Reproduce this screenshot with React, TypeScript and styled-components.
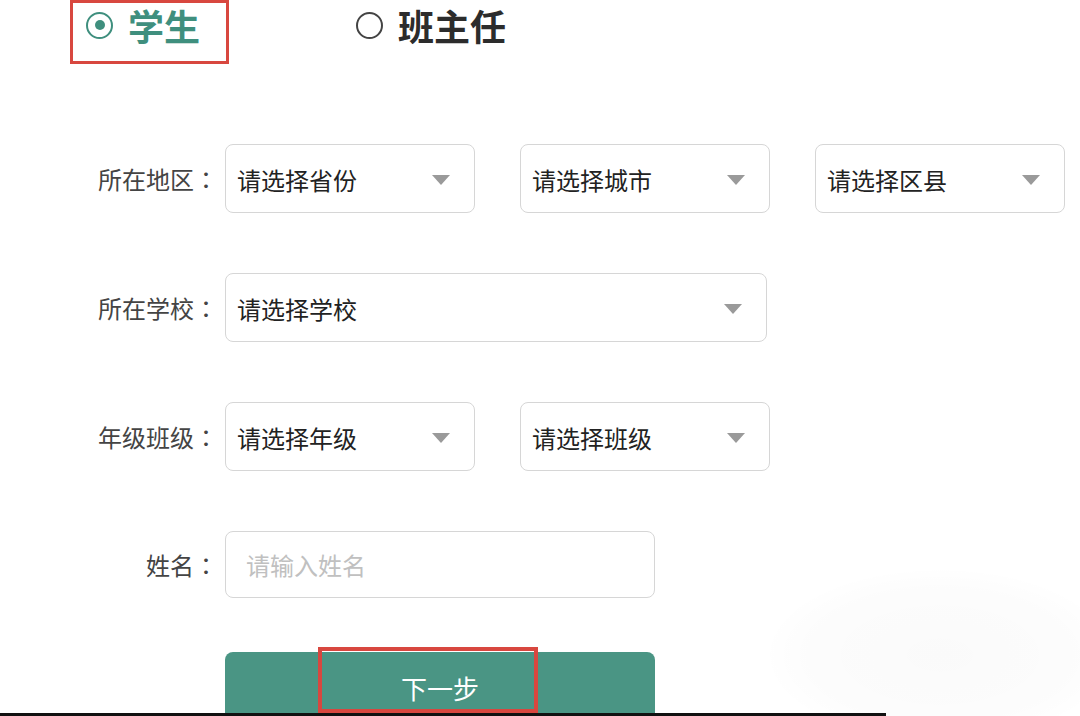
import React from "react";
import styled, { createGlobalStyle } from "styled-components";

const GlobalStyle = createGlobalStyle`
  html, body {
    margin: 0;
    padding: 0;
    background: #ffffff;
  }
  body {
    font-family: "Noto Sans CJK SC", "Noto Sans", "Liberation Sans", sans-serif;
  }
`;

const Page = styled.div`
  position: relative;
  width: 1080px;
  height: 716px;
  overflow: hidden;
  background: #ffffff;
`;

const Tabs = styled.div`
  display: flex;
  align-items: flex-start;
  gap: 111px;
  padding-left: 70px;
`;

const Tab = styled.div<{ $marked?: boolean }>`
  display: flex;
  align-items: center;
  gap: 15px;
  height: 44px;
  padding: 0 26px 14px 13px;
  border: 3px solid ${(p) => (p.$marked ? "#d8473f" : "transparent")};
`;

const Radio = styled.span<{ $checked?: boolean }>`
  position: relative;
  width: 23px;
  height: 23px;
  border-radius: 50%;
  border: 2px solid ${(p) => (p.$checked ? "#3f8f7e" : "#444444")};
  &::after {
    content: "";
    display: ${(p) => (p.$checked ? "block" : "none")};
    position: absolute;
    top: 6.5px;
    left: 6.5px;
    width: 10px;
    height: 10px;
    border-radius: 50%;
    background: #3f8f7e;
  }
`;

const TabText = styled.span<{ $active?: boolean }>`
  font-size: 36px;
  font-weight: 700;
  line-height: 44px;
  color: ${(p) => (p.$active ? "#3f8f7e" : "#2c2c2c")};
`;

const Form = styled.div`
  display: flex;
  flex-direction: column;
  gap: 60px;
  margin-top: 80px;
`;

const Row = styled.div`
  display: flex;
  align-items: center;
  gap: 7px;
`;

const Label = styled.div`
  width: 218px;
  text-align: right;
  font-size: 24px;
  color: #444444;
`;

const Colon = styled.span`
  font-family: "Noto Sans CJK TC", "Noto Sans CJK SC", sans-serif;
`;

const Controls = styled.div`
  display: flex;
  gap: 45px;
`;

const Select = styled.div<{ $width: number }>`
  display: flex;
  align-items: center;
  justify-content: space-between;
  box-sizing: border-box;
  width: ${(p) => p.$width}px;
  height: 69px;
  padding: 2px 24px 0 11px;
  border: 1.5px solid #d6d6d6;
  border-radius: 8px;
  font-size: 24px;
  color: #222222;
`;

const Arrow = styled.span`
  width: 0;
  height: 0;
  border-left: 9px solid transparent;
  border-right: 9px solid transparent;
  border-top: 10px solid #9a9a9a;
`;

const Input = styled.input`
  box-sizing: border-box;
  width: 430px;
  height: 67px;
  padding: 0 20px;
  border: 1.5px solid #d6d6d6;
  border-radius: 8px;
  font-family: inherit;
  font-size: 24px;
  color: #222222;
  outline: none;
  &::placeholder {
    color: #c0c0c0;
  }
`;

const ButtonRow = styled.div`
  margin-top: -6px;
  padding-left: 225px;
`;

const NextButton = styled.button`
  position: relative;
  width: 430px;
  height: 76px;
  padding: 0 0 6px;
  border: none;
  border-radius: 8px;
  background: #4a9584;
  color: #ffffff;
  font-family: inherit;
  font-size: 26px;
`;

const Highlight = styled.span`
  position: absolute;
  top: -5px;
  left: 93px;
  width: 220px;
  height: 66px;
  box-sizing: border-box;
  border: 4px solid #d8473f;
`;

const BottomRule = styled.div`
  position: absolute;
  left: 0;
  bottom: 0;
  width: 886px;
  height: 3px;
  background: #111111;
`;

const Smudge = styled.div`
  position: absolute;
  left: 770px;
  top: 570px;
  width: 340px;
  height: 170px;
  border-radius: 50%;
  background: radial-gradient(ellipse at center, rgba(0, 0, 0, 0.018) 0%, rgba(0, 0, 0, 0.01) 55%, rgba(0, 0, 0, 0) 75%);
  pointer-events: none;
`;

function Dropdown({ text, width }: { text: string; width: number }) {
  return (
    <Select $width={width}>
      <span>{text}</span>
      <Arrow />
    </Select>
  );
}

function FieldLabel({ text }: { text: string }) {
  return (
    <Label>
      {text}
      <Colon>：</Colon>
    </Label>
  );
}

export default function App() {
  return (
    <Page>
      <GlobalStyle />
      <Tabs>
        <Tab $marked>
          <Radio $checked />
          <TabText $active>学生</TabText>
        </Tab>
        <Tab>
          <Radio />
          <TabText>班主任</TabText>
        </Tab>
      </Tabs>
      <Form>
        <Row>
          <FieldLabel text="所在地区" />
          <Controls>
            <Dropdown text="请选择省份" width={250} />
            <Dropdown text="请选择城市" width={250} />
            <Dropdown text="请选择区县" width={250} />
          </Controls>
        </Row>
        <Row>
          <FieldLabel text="所在学校" />
          <Controls>
            <Dropdown text="请选择学校" width={542} />
          </Controls>
        </Row>
        <Row>
          <FieldLabel text="年级班级" />
          <Controls>
            <Dropdown text="请选择年级" width={250} />
            <Dropdown text="请选择班级" width={250} />
          </Controls>
        </Row>
        <Row>
          <FieldLabel text="姓名" />
          <Input placeholder="请输入姓名" />
        </Row>
        <ButtonRow>
          <NextButton type="button">
            下一步
            <Highlight />
          </NextButton>
        </ButtonRow>
      </Form>
      <Smudge />
      <BottomRule />
    </Page>
  );
}
